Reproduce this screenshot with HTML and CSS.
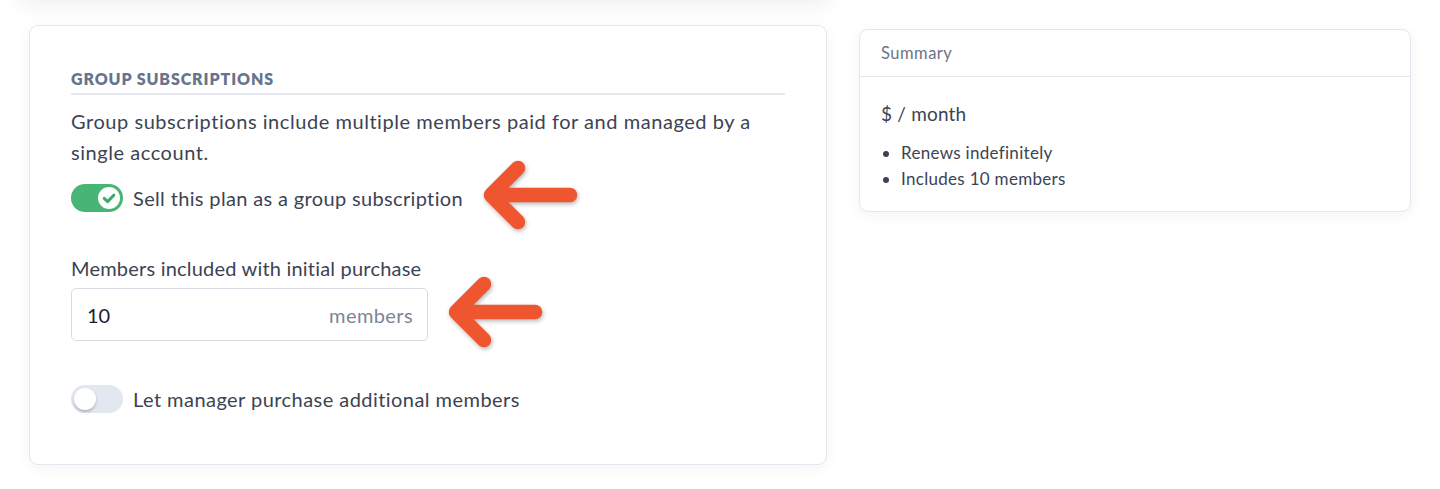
FILE: index.html
```html
<!DOCTYPE html>
<html>
<head>
<meta charset="utf-8">
<link rel="stylesheet" href="styles.css">
</head>
<body>
<div class="prev-shadow"></div>
<div class="page">
  <section class="card main-card">
    <h2 class="section-title">Group subscriptions</h2>
    <p class="desc">Group subscriptions include multiple members paid for and managed by a single account.</p>
    <div class="toggle-row">
      <span class="toggle on"><span class="knob"><svg viewBox="0 0 22 22" width="22" height="22"><path d="M6.2 11.4 L9.6 14.6 L15.8 8.2" fill="none" stroke="#3fa86b" stroke-width="3" stroke-linecap="round" stroke-linejoin="round"/></svg></span></span>
      <span class="toggle-label">Sell this plan as a group subscription</span>
    </div>
    <label class="field-label">Members included with initial purchase</label>
    <div class="input">
      <span class="input-value">10</span>
      <span class="input-suffix">members</span>
    </div>
    <div class="toggle-row second">
      <span class="toggle off"><span class="knob"></span></span>
      <span class="toggle-label wide">Let manager purchase additional members</span>
    </div>
  </section>
  <aside class="card summary-card">
    <div class="summary-head">Summary</div>
    <div class="summary-body">
      <div class="price">$ / month</div>
      <ul class="summary-list">
        <li>Renews indefinitely</li>
        <li>Includes 10 members</li>
      </ul>
    </div>
  </aside>
</div>
<svg class="arrows" width="1440" height="489" viewBox="0 0 1440 489">
  <g fill="none" stroke="#ef5630" stroke-width="14.5" stroke-linecap="round" stroke-linejoin="round">
    <path d="M570 195 L491 195 M518 168 L491 195 L518 222"/>
    <path d="M535 312 L456 312 M484 284 L456 312 L484 340"/>
  </g>
</svg>
</body>
</html>
```

FILE: styles.css
```css
* { box-sizing: border-box; }
html, body {
  margin: 0;
  padding: 0;
  background: #ffffff;
  width: 1440px;
  height: 489px;
  overflow: hidden;
  position: relative;
}
body {
  font-family: Lato, "Noto Sans", sans-serif;
  color: #3c4353;
}
.prev-shadow {
  position: absolute;
  left: 20px;
  top: -40px;
  width: 810px;
  height: 40px;
  border-radius: 8px;
  box-shadow: 0 4px 22px rgba(30, 40, 60, 0.08);
}
.page {
  display: flex;
  align-items: flex-start;
  gap: 32px;
  padding: 25px 0 0 29px;
}
.card {
  background: #fff;
  border: 1px solid #e3e6ee;
  border-radius: 9px;
  box-shadow: 0 3px 14px rgba(30, 40, 60, 0.05);
}
.main-card {
  width: 798px;
  height: 440px;
  padding: 43px 41px 0 41px;
}
.section-title {
  margin: 0;
  font-size: 16px;
  line-height: 20px;
  font-weight: 800;
  text-transform: uppercase;
  letter-spacing: 0.9px;
  color: #66748c;
  padding-bottom: 4px;
  border-bottom: 2px solid #e6e9ef;
}
.desc {
  margin: 11px 0 0 0;
  font-size: 20px;
  line-height: 31px;
  letter-spacing: 0.55px;
  max-width: 710px;
}
.toggle-row {
  display: flex;
  align-items: center;
  gap: 10px;
  margin-top: 16px;
  height: 28px;
}
.toggle-row.second { margin-top: 44px; }
.toggle {
  width: 52px;
  height: 28px;
  border-radius: 14px;
  position: relative;
  flex: none;
}
.toggle.on { background: #48b575; }
.toggle.off { background: #e3e8f0; }
.knob {
  position: absolute;
  top: 3px;
  width: 22px;
  height: 22px;
  border-radius: 50%;
  background: #fff;
  display: flex;
}
.toggle.on .knob { right: 3px; }
.toggle.off .knob {
  left: 3px;
  box-shadow: 0 2px 3px rgba(20, 30, 50, 0.25);
}
.toggle-label {
  font-size: 20px;
  letter-spacing: 0.35px;
}
.toggle-label.wide { letter-spacing: 0.45px; }
.field-label {
  display: block;
  margin-top: 44px;
  font-size: 20px;
  line-height: 24px;
  letter-spacing: 0.2px;
}
.input {
  margin-top: 8px;
  width: 357px;
  height: 53px;
  border: 1.5px solid #d8dce4;
  border-radius: 5px;
  display: flex;
  align-items: center;
  justify-content: space-between;
  padding: 1px 14px 0 15px;
  font-size: 20px;
}
.input-value { color: #1c2230; }
.input-suffix { color: #7b8597; letter-spacing: 0.4px; }

.summary-card {
  width: 552px;
  margin-top: 4px;
}
.summary-head {
  height: 47px;
  padding: 13px 21px 0;
  font-size: 16.5px;
  color: #6b7486;
  border-bottom: 1px solid #e3e6ee;
  letter-spacing: 0.5px;
}
.summary-body {
  padding: 25px 21px 19px;
}
.price {
  font-size: 19px;
  line-height: 24px;
  color: #3c4353;
  letter-spacing: 0.2px;
}
.summary-list {
  margin: 14px 0 0;
  padding: 0 0 0 20px;
  font-size: 17px;
  line-height: 26px;
  letter-spacing: 0.3px;
  color: #3c4353;
}
.summary-list li { padding-left: 0; }
.arrows {
  position: absolute;
  left: 0;
  top: 0;
  pointer-events: none;
  filter: drop-shadow(1px 2px 2px rgba(0, 0, 0, 0.28));
}
```
